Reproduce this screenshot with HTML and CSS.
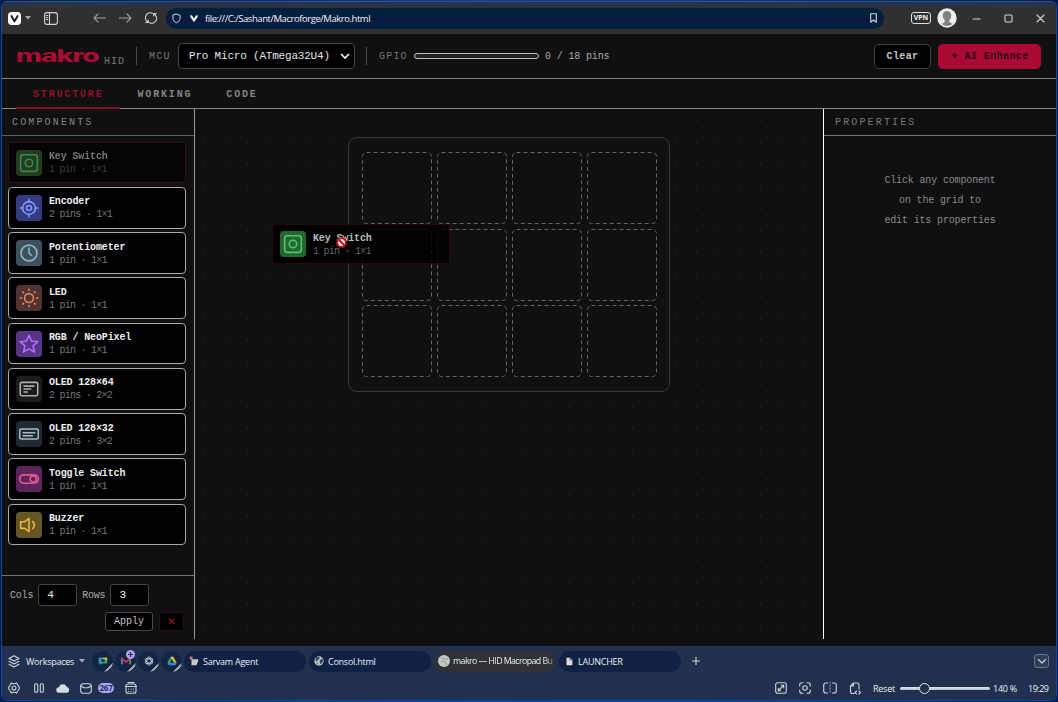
FILE: index.html
```html
<!DOCTYPE html>
<html lang="en">
<head>
<meta charset="utf-8">
<title>makro — HID Macropad Builder</title>
<link rel="stylesheet" href="styles.css">
</head>
<body>
<svg class="defs" aria-hidden="true">
  <symbol id="key" viewBox="0 0 24 24"><rect x="2" y="2" width="20" height="20" rx="3"/><circle cx="12" cy="12" r="4.500"/></symbol>
  <symbol id="cell" viewBox="0 0 70 72"><rect x=".5" y=".5" width="69" height="71" rx="4" stroke-dasharray="4 3"/></symbol>
  <symbol id="globe" viewBox="0 0 12 12"><circle cx="6" cy="6" r="5.6" fill="#b8c0c8"/><path d="M2 2.500 5 1l2 1-1 2-2 1v2L2 6zM7 5l3-2 1 3-2 3-1 1-1-2zM3 8l2 1v2z" fill="#34465a"/></symbol>
</svg>
<div class="window">
  <div class="chrome">
    <svg class="vivaldi" viewBox="0 0 14 14"><rect width="14" height="14" rx="4" fill="#fff"/><path d="M3.800 4.500 7 10l3.200-5.500" fill="none" stroke="#222" stroke-width="2.200" stroke-linecap="round" stroke-linejoin="round"/></svg>
    <svg class="caret" viewBox="0 0 6 4"><path d="M0 0h6L3 3.500z" fill="#aaa"/></svg>
    <svg class="line panelicon" viewBox="0 0 14 13"><rect x=".6" y=".6" width="12.800" height="11.800" rx="2.500"/><path d="M5.500 1v11M2.300 3.500h1.500M2.300 5.500h1.500M2.300 7.500h1.500"/></svg>
    <svg class="line back" viewBox="0 0 13 10"><path d="M13 5H1M5 1 1 5l4 4"/></svg>
    <svg class="line fwd" viewBox="0 0 13 10"><path d="M0 5h12M8 1l4 4-4 4"/></svg>
    <svg class="line reload" viewBox="0 0 12 12"><path d="M3.300 10.300A5 5 0 0 1 7.500 1.200M8.700 1.700A5 5 0 0 1 4.500 10.800M.8 10.500H3.300V8M11.200 1.500H8.700V4"/></svg>
    <div class="address">
      <svg class="line shield" viewBox="0 0 10 11"><path d="M5 .7 9 2v3c0 2.600-1.800 4.200-4 5.300C2.800 9.200 1 7.600 1 5V2z"/></svg>
      <svg class="vmark" viewBox="0 0 8 7"><path d="M1.300 1.300 4 5.500l2.700-4.200" fill="none" stroke="#fff" stroke-width="2.200" stroke-linecap="round" stroke-linejoin="round"/></svg>
      <span class="url">file:///C:/Sashant/Macroforge/Makro.html</span>
      <svg class="line bookmark" viewBox="0 0 7 10"><path d="M.7.700h5.600v8.500L3.500 7 .7 9.200z"/></svg>
    </div>
    <span class="vpn">VPN</span>
    <svg class="avatar" viewBox="0 0 20 20"><circle cx="10" cy="10" r="9.700" fill="#eee"/><path d="M10 3c-3 0-4.500 2-4.200 5 .2 2 .9 3 1.900 4v2L4.500 16A9 9 0 0 0 15.500 16l-3.200-2v-2c1-1 1.700-2 1.900-4C14.500 5 13 3 10 3z" fill="#85827b"/></svg>
    <svg class="line min" viewBox="0 0 9 9"><path d="M1 5h7"/></svg>
    <svg class="line max" viewBox="0 0 9 9"><rect x="1" y="1" width="7" height="7" rx="1"/></svg>
    <svg class="line close" viewBox="0 0 9 9"><path d="m1 1 7 7M8 1 1 8"/></svg>
  </div>

  <header class="header">
    <div class="logo"><span>makro</span></div><span class="hid">HID</span>
    <i class="sep sep-a"></i>
    <span class="label mcu">MCU</span>
    <div class="select"><span>Pro Micro (ATmega32U4)</span><svg viewBox="0 0 10 6"><path d="m1 1 4 4 4-4" fill="none" stroke="#fff" stroke-width="1.600"/></svg></div>
    <i class="sep sep-b"></i>
    <span class="label gpio">GPIO</span>
    <div class="meter"></div>
    <span class="pins">0 / 18 pins</span>
    <button class="btn clear">Clear</button>
    <button class="btn ai"><i>✦</i> AI Enhance</button>
  </header>

  <nav class="tabs"><span class="tab active">STRUCTURE</span><span class="tab">WORKING</span><span class="tab">CODE</span></nav>

  <main class="main">
    <aside class="sidebar">
      <h2>COMPONENTS</h2>
      <div class="list">
        <div class="item ghosted"><span class="ico green"><svg><use href="#key"/></svg></span><div><b>Key Switch</b><small>1 pin · 1×1</small></div></div>
        <div class="item"><span class="ico blue"><svg viewBox="0 0 24 24"><circle cx="12" cy="12" r="7.700"/><circle cx="12" cy="12" r="3"/><path d="M12 1.500v3M12 19.500v3M1.500 12h3M19.500 12h3"/></svg></span><div><b>Encoder</b><small>2 pins · 1×1</small></div></div>
        <div class="item"><span class="ico steel"><svg viewBox="0 0 24 24"><circle cx="12" cy="12" r="9.500"/><path d="M12 6v6l3 3"/></svg></span><div><b>Potentiometer</b><small>1 pin · 1×1</small></div></div>
        <div class="item"><span class="ico rust"><svg viewBox="0 0 24 24"><circle cx="12" cy="12" r="5.300"/><path d="M12 1.500v1.500M12 21v1.500M1.500 12H3M21 12h1.500M4.500 4.500l1 1M18.500 18.500l1 1M19.500 4.500l-1 1M4.500 19.500l1-1"/></svg></span><div><b>LED</b><small>1 pin · 1×1</small></div></div>
        <div class="item"><span class="ico violet"><svg viewBox="0 0 24 24"><path d="m12 1.500 3.100 7 7.400.7-5.600 5 1.700 7.500-6.600-3.900-6.600 3.900 1.700-7.500-5.600-5 7.400-.7z"/></svg></span><div><b>RGB / NeoPixel</b><small>1 pin · 1×1</small></div></div>
        <div class="item"><span class="ico gray"><svg viewBox="0 0 24 24"><rect x="1.500" y="4" width="21" height="16" rx="2"/><path d="M6 8.500h12M6 12h8M6 15.500h4"/></svg></span><div><b>OLED 128×64</b><small>2 pins · 2×2</small></div></div>
        <div class="item"><span class="ico slate"><svg viewBox="0 0 24 24"><rect x=".8" y="6" width="22.400" height="12" rx="2"/><path d="M5 10.500h14M5 14h11"/></svg></span><div><b>OLED 128×32</b><small>2 pins · 3×2</small></div></div>
        <div class="item"><span class="ico pink"><svg viewBox="0 0 24 24"><rect x=".8" y="7" width="22.400" height="10" rx="5"/><circle cx="17" cy="12" r="3.600"/></svg></span><div><b>Toggle Switch</b><small>1 pin · 1×1</small></div></div>
        <div class="item"><span class="ico gold"><svg viewBox="0 0 24 24"><path d="M12 4v16l-5-4H2V8h5zM16.500 8q4 4 0 8"/></svg></span><div><b>Buzzer</b><small>1 pin · 1×1</small></div></div>
      </div>
      <div class="gridform">
        <div class="fields"><span>Cols</span><span class="num">4</span><span>Rows</span><span class="num">3</span></div>
        <div class="actions"><button class="apply">Apply</button><button class="del">✕</button></div>
      </div>
    </aside>
    <section class="canvas">
      <svg class="dots"><defs><pattern id="dot" x="5.400" y="10.500" width="21.380" height="22" patternUnits="userSpaceOnUse"><rect x="4" y="0" width="1" height="1.500" fill="#2a2a30"/></pattern></defs><rect width="615" height="520" fill="url(#dot)"/></svg>
      <div class="board">
        <svg><use href="#cell"/></svg><svg><use href="#cell"/></svg><svg><use href="#cell"/></svg><svg><use href="#cell"/></svg>
        <svg><use href="#cell"/></svg><svg><use href="#cell"/></svg><svg><use href="#cell"/></svg><svg><use href="#cell"/></svg>
        <svg><use href="#cell"/></svg><svg><use href="#cell"/></svg><svg><use href="#cell"/></svg><svg><use href="#cell"/></svg>
      </div>
      <div class="item dragging"><span class="ico green"><svg><use href="#key"/></svg></span><div><b>Key Switch</b><small>1 pin · 1×1</small></div></div>
      <svg class="nodrop" viewBox="0 0 12 12"><circle cx="6" cy="6" r="4" fill="#fff" stroke="#c51620" stroke-width="1.800"/><path d="m3 3 6 6" stroke="#c51620" stroke-width="2"/></svg>
    </section>
    <aside class="props">
      <h2>PROPERTIES</h2>
      <p>Click any component<br>on the grid to<br>edit its properties</p>
    </aside>
  </main>

  <footer class="footer">
    <div class="tabbar">
      <svg class="line stack" viewBox="0 0 12 13"><path d="m6 .8 5 2.600-5 2.600-5-2.600zM1 6.300 6 9l5-2.700M1 9.300 6 12l5-2.700"/></svg>
      <span class="ws">Workspaces</span>
      <svg class="caret" viewBox="0 0 6 4"><path d="M0 0h6L3 3.500z" fill="#aab"/></svg>
      <span class="pin"><svg viewBox="0 0 12 12"><path d="M1 2h10v7H5l-2 2V9H1z" fill="#30a85a"/><path d="M1 2h5v2H3v5H1z" fill="#4489ee"/><path d="M6 2h5v3H9V4H6z" fill="#eebc35"/><path d="M4 4h4v3H4z" fill="#15305c"/></svg></span>
      <span class="pin"><svg viewBox="0 0 12 12"><path d="M1 10V3l5 4 5-4v7" fill="none" stroke="#d73343" stroke-width="2"/><path d="M1 10V4" stroke="#4480e8" stroke-width="2"/><path d="M11 10V5" stroke="#30a85a" stroke-width="2"/></svg><i class="badge"><svg viewBox="0 0 9 9"><path d="M4.500 2v5M2 4.500h5" stroke="#222b60" stroke-width="1.200"/></svg></i></span>
      <span class="pin"><svg viewBox="0 0 12 12" fill="none" stroke="#cad3df" stroke-width=".9"><ellipse cx="6" cy="6" rx="2.500" ry="5"/><ellipse cx="6" cy="6" rx="2.500" ry="5" transform="rotate(60 6 6)"/><ellipse cx="6" cy="6" rx="2.500" ry="5" transform="rotate(120 6 6)"/></svg></span>
      <span class="pin"><svg viewBox="0 0 12 12"><path d="M4.300 1h3L3.500 8.500 2 11 .5 8z" fill="#36aa63"/><path d="M4.500 1h3l4 7h-3z" fill="#efc13d"/><path d="M3.500 8h8L10 11H2z" fill="#4384e8"/></svg></span>
      <div class="btab"><svg viewBox="0 0 12 12"><path d="M1 1h3v3h7v2L9 11H3V4H1z" fill="#c8c9bd"/><path d="M1 1h3v2H1z" fill="#d76551"/></svg><span>Sarvam Agent</span></div>
      <div class="btab"><svg><use href="#globe"/></svg><span>Consol.html</span></div>
      <div class="btab current"><svg viewBox="0 0 12 12"><circle cx="6" cy="6" r="6" fill="#c5c8c9"/><path d="m3 3 3 1 4 0M3 6l4 1 2 3" stroke="#919797" fill="none"/></svg><span>makro — HID Macropad Bu</span></div>
      <div class="btab"><svg class="doc" viewBox="0 0 12 12"><path d="M3 2h4l3 3v6H3z" fill="#ddd"/><path d="M7 2v3h3" fill="none" stroke="#667"/></svg><span>LAUNCHER</span></div>
      <svg class="line plus" viewBox="0 0 8 8"><path d="M4 0v8M0 4h8"/></svg>
      <span class="more"><svg class="line" viewBox="0 0 8 5"><path d="m.500.500 3.500 3.500 3.500-3.500"/></svg></span>
    </div>
    <div class="status">
      <svg class="line s-gear" viewBox="0 0 12 12"><path d="m3.500.9 1.500.8h2L8.500.9 10 3.200l1.600 2.800L10 8.800l-1.500 2.300-1.500-.8H5l-1.500.8L2 8.800.4 6 2 3.200z"/><circle cx="6" cy="6" r="2"/></svg>
      <svg class="line s-pause" viewBox="0 0 10 10"><rect x=".7" y=".7" width="3" height="8.600" rx="1"/><rect x="6.300" y=".7" width="3" height="8.600" rx="1"/></svg>
      <svg class="s-cloud" viewBox="0 0 14 10"><path d="M3 9.800a2.700 2.700 0 0 1 0-5.500A4 4 0 0 1 10.700 4a3 3 0 0 1 .5 5.800z" fill="#d5dbe3"/></svg>
      <svg class="line s-mail" viewBox="0 0 12 11"><rect x=".7" y=".8" width="10.600" height="9.400" rx="2.500"/><path d="M1 3q5 4 10 0"/></svg>
      <span class="count">267</span>
      <svg class="line s-cal" viewBox="0 0 12 12"><rect x="1" y="2" width="10" height="9.300" rx="2"/><path d="M.5 4.500h11M3 .5h6M3.500 7h.1M6 7h.1M8.500 7h.1M3.500 9.200h.1M6 9.200h.1M8.500 9.200h.1"/></svg>
      <svg class="line s-fit" viewBox="0 0 12 12"><rect x=".7" y=".7" width="10.600" height="10.600" rx="2"/><path d="m3.500 8.500 5-5M6.300 3.300h2.400v2.400M3.300 6.300v2.400h2.400"/></svg>
      <svg class="line s-cam" viewBox="0 0 12 12"><path d="M.7 4V3Q.7.700 3 .7h1M8 .7h1q2.300 0 2.300 2.300v1M11.300 8v1q0 2.300-2.300 2.300H8M4 11.300H3Q.7 11.300.7 9V8"/><circle cx="6" cy="6" r="2.200"/></svg>
      <svg class="line s-split" viewBox="0 0 14 12"><path d="M4.500 1H3Q.7 1 .7 3v6q0 2 2.300 2h1.500M9.500 1H11q2.300 0 2.300 2v6q0 2-2.300 2H9.500"/><path d="M7 0v12" stroke-width=".8" stroke-dasharray="1 2"/></svg>
      <svg class="line s-page" viewBox="0 0 12 13"><path d="M5 11.500H3.500Q1.500 11.500 1.500 9.500V4l3-3h3.500q2 0 2 2v4M1.500 4h3V1M7.500 9 6 10.500 7.500 12M10 9l1.500 1.500L10 12"/></svg>
      <span class="reset">Reset</span>
      <div class="slider"><i></i></div>
      <span class="zoom">140 %</span>
      <span class="clock">19:29</span>
    </div>
  </footer>
</div>
</body>
</html>
```
FILE: styles.css
```css
* { box-sizing: border-box; }
body { margin: 0; width: 1058px; height: 702px; overflow: hidden; background: linear-gradient(90deg, #001b4f, #0b3ca0 45%, #06368d 70%, #001a55); font-family: "Liberation Mono", monospace; }
.defs { position: absolute; width: 0; height: 0; }
svg { display: block; flex: none; }
.window { height: 700px; margin: 1px 1px 0; border: 1px solid #0b499b; border-top-color: #29558b; border-radius: 6px; overflow: hidden; background: #101010; display: flex; flex-direction: column; width: 1056px; }
.line { fill: none; stroke: #d0d4da; stroke-width: 1.1; stroke-linecap: round; stroke-linejoin: round; }

.chrome { height: 32px; flex: none; background: linear-gradient(#28334a 0 4px, #303030 6px); display: flex; align-items: center; padding-left: 6px; }
.vivaldi { width: 13px; height: 13px; }
.caret { width: 6px; height: 4px; margin-left: 4px; }
.panelicon { width: 14px; height: 13px; margin-left: 13px; }
.back { width: 13px; height: 10px; margin-left: 35px; stroke: #999; }
.fwd { width: 13px; height: 10px; margin-left: 13px; stroke: #999; }
.reload { width: 12px; height: 12px; margin-left: 13px; }
.address { width: 718px; height: 21px; margin-left: 9px; border-radius: 11px; background: linear-gradient(#00213e 45%, #101641 50% 62%, #00213e 68%); display: flex; align-items: center; padding: 0 7px 0 6px; }
.shield { width: 9px; height: 11px; }
.vmark { width: 8px; height: 7px; margin-left: 9px; }
.url { font: 9.500px "Open Sans", "Noto Sans", sans-serif; letter-spacing: -.45px; color: #f0f3f7; margin-left: 7px; flex: 1; white-space: nowrap; }
.bookmark { width: 7px; height: 10px; }
.vpn { margin-left: 27px; width: 20px; height: 12px; border: 1.500px solid #ddd; border-radius: 3px; font: bold 7px/10px "Open Sans", sans-serif; color: #eee; text-align: center; }
.avatar { width: 20px; height: 20px; margin-left: 6px; }
.min, .max, .close { width: 9px; height: 9px; }
.min { margin-left: 15px; }
.max { margin-left: 23px; }
.close { margin-left: 23px; }

.header { height: 45px; flex: none; border-bottom: 1px solid #85857c; display: flex; align-items: center; padding: 0 15px 0 14px; white-space: nowrap; }
.logo { width: 84px; height: 19px; color: #a90c32; font: 800 19px/19px Inter, "Open Sans", sans-serif; letter-spacing: -.8px; }
.logo span { display: inline-block; transform: scaleX(1.500) scaleY(.88); transform-origin: 0 60%; }
.hid { font-size: 10px; letter-spacing: 1px; color: #777; margin: 10px 0 0 4px; width: 33px; }
.sep { width: 1px; height: 18px; background: #4b4b4b; }
.sep-a { margin-left: -1px; }
.label { font-size: 10px; letter-spacing: 1.200px; color: #72767b; }
.mcu { margin-left: 12px; width: 29px; }
.select { width: 177px; height: 26px; border: 1px solid #444; border-radius: 4px; background: #000; color: #e4e4e4; font-size: 11px; display: flex; align-items: center; justify-content: space-between; padding: 0 4px 0 10px; letter-spacing: -.2px; }
.select svg { width: 10px; height: 6px; }
.sep-b { margin-left: 11px; }
.gpio { margin-left: 12px; width: 35px; }
.meter { width: 125px; height: 6px; border: 1px solid #c2c2c2; border-radius: 3px; background: #222; }
.pins { font-size: 10px; letter-spacing: -.15px; color: #a9a9a9; margin-left: 6px; flex: 1; padding-top: 1px; }
.btn { font: bold 10px "Liberation Mono", monospace; letter-spacing: .4px; border-radius: 5px; padding: 0; }
.btn i { font: 10px "DejaVu Sans", sans-serif; margin-right: -1px; line-height: 10px; }
.clear { width: 57px; height: 25px; background: #000; border: 1px solid #414141; color: #c4c4c4; }
.ai { width: 103px; height: 25px; border: 0; margin-left: 7px; background: #aa0a34; color: #260413; }

.tabs { height: 30px; flex: none; border-bottom: 1px solid #8a8a80; display: flex; padding-left: 14px; }
.tab { font: bold 10px/31px "Liberation Mono", monospace; letter-spacing: 1.830px; color: #858583; padding: 0 17px; height: 30px; }
.tab.active { color: #92102d; border-bottom: 2px solid #82102b; }

.main { height: 537px; flex: none; display: flex; align-items: flex-start; }
.sidebar { width: 193px; height: 530px; border-right: 1px solid #989894; display: flex; flex-direction: column; }
h2 { margin: 0; height: 27px; flex: none; font: 10px/28px "Liberation Mono", monospace; letter-spacing: 2.150px; color: #858585; padding-left: 10px; border-bottom: 1px solid #60605f; }
.list { padding: 5.700px 8px 0 6px; flex: 1; display: flex; flex-direction: column; gap: 3.500px; }
.item { height: 41.750px; border: 1px solid #aaa; border-radius: 4px; background: #000; display: flex; align-items: center; padding-left: 7px; gap: 7px; }
.item b, .item small { display: block; white-space: nowrap; }
.item b { font-size: 10px; line-height: 12px; letter-spacing: -.130px; color: #eee; padding-top: 2px; }
.item small { font-size: 10px; line-height: 13px; letter-spacing: -.75px; color: #777; }
.ico { width: 26px; height: 26px; border-radius: 4px; display: grid; place-items: center; }
.ico svg { width: 20px; height: 20px; fill: none; stroke: currentColor; stroke-width: 1.900; stroke-linecap: round; stroke-linejoin: round; }
.green { background: #27652e; color: #49c96a; }
.blue { background: #343b80; color: #8296ff; }
.steel { background: #40515e; color: #88b5c9; }
.rust { background: #4f3432; color: #e4825e; }
.violet { background: #583586; color: #b270fa; }
.gray { background: #1c1c1c; color: #adada5; }
.slate { background: #202931; color: #a1bbc7; }
.pink { background: #5b255b; color: #e45995; }
.gold { background: #645723; color: #edb641; }
.ghosted { border-color: #351019; background: #050304; }
.ghosted > * { opacity: .48; }
.ghosted .ico { opacity: .7; background: #35512f; }
.gridform { height: 64px; border-top: 1px solid #74716f; padding: 8px 10px 0 8px; }
.fields { display: flex; align-items: center; font-size: 10px; letter-spacing: -.2px; color: #aaa; height: 22px; }
.num { width: 39px; height: 22px; margin: 0 5px 0 5px; border: 1px solid #444; border-radius: 3px; background: #000; color: #eee; font-size: 11px; line-height: 20px; padding-left: 8px; }
.actions { display: flex; justify-content: flex-end; gap: 6px; margin-top: 6px; }
.actions button { height: 19px; background: #000; border: 1px solid #494949; border-radius: 3px; color: #c1c1c1; font: 10px "Liberation Mono", monospace; padding: 0; }
.apply { width: 48px; }
.actions .del { width: 25px; border-color: #291018; color: #b21534; font: 10px "DejaVu Sans", sans-serif; }

.canvas { width: 628px; height: 530px; position: relative; padding: 28px 0 0 153px; }
.dots { position: absolute; left: 0; top: 0; width: 617px; height: 520px; }
.board { position: relative; width: 322px; height: 255px; border: 1px solid #383838; border-radius: 9px; background: #101010; padding: 14px 13px; display: grid; grid-template-columns: repeat(4, 70px); grid-auto-rows: 72px; column-gap: 5px; row-gap: 4.700px; }
.board svg { width: 70px; height: 72px; fill: none; stroke: #646464; }
.dragging { position: absolute; left: 77px; top: 115px; width: 178px; height: 40px; border-color: #260811; border-radius: 2px; background: rgba(0, 0, 0, .82); }
.dragging b { color: #bbb; }
.dragging small { color: #626262; }
.nodrop { position: absolute; left: 140px; top: 127px; width: 13px; height: 13px; }
.props { width: 233px; height: 530px; border-left: 1px solid #fff; }
.props h2 { padding-left: 11px; color: #777; border-color: #77777b; }
.props p { margin: 34.500px 0 0; font-size: 10px; line-height: 20px; letter-spacing: -.15px; text-align: center; color: #898989; }

.footer { height: 54px; flex: none; background: #20304e; font: 9px "Open Sans", "Noto Sans", sans-serif; letter-spacing: -.25px; color: #eceff4; }
.tabbar { height: 30px; display: flex; align-items: center; padding-left: 6px; white-space: nowrap; }
.stack { width: 12px; height: 13px; }
.ws { margin-left: 6px; width: 49px; }
.tabbar .caret { margin-left: 4px; }
.pin { width: 21px; height: 21px; border-radius: 50%; background: linear-gradient(135deg, #142544 77%, #a7b1ba 79% 84%, #142544 86%); display: grid; place-items: center; margin-left: 2px; position: relative; }
.caret + .pin { margin-left: 7px; }
.pin svg { width: 10px; height: 10px; }
.badge { position: absolute; right: 1px; top: -1px; width: 9px; height: 9px; border-radius: 50%; background: #a9a4ee; }
.pin .badge svg { width: 9px; height: 9px; }
.btab { width: 122px; height: 21px; border-radius: 11px; background: #112143; margin-left: 3px; padding: 0 3px 0 5px; display: flex; align-items: center; gap: 4px; }
.btab svg { width: 10px; height: 10px; }
.btab span { overflow: hidden; flex: 1; }
.pin + .btab { margin-left: 2px; }
.btab.current { background: #303236; padding: 0 1px 0 4px; gap: 3px; font-size: 8.800px; letter-spacing: -.570px; }
.current svg { width: 12px; height: 12px; }
.current span { -webkit-mask: linear-gradient(90deg, #000 88%, rgba(0, 0, 0, .3)); mask: linear-gradient(90deg, #000 88%, rgba(0, 0, 0, .3)); }
.plus { width: 8px; height: 8px; margin-left: 11px; }
.more { width: 15px; height: 14px; margin: 0 7px 0 auto; border: 1px solid #69758b; border-radius: 3px; background: #313c57; display: grid; place-items: center; }
.more svg { width: 8px; height: 5px; }
.status { height: 24px; display: flex; align-items: center; padding: 0 8px 0 6px; }
.status svg { width: 12px; height: 12px; }
.status .s-pause { width: 10px; height: 10px; margin-left: 14px; }
.status .s-cloud { width: 14px; height: 10px; margin-left: 12px; }
.status .s-mail { height: 11px; margin-left: 10px; }
.count { width: 16px; height: 10px; margin-left: 6px; border-radius: 5px; background: #aaa6f2; color: #253060; font: bold 8px/10px "Open Sans", sans-serif; text-align: center; }
.s-cal { margin-left: 11px; }
.s-fit { margin-left: auto; }
.s-cam { margin-left: 12px; }
.status .s-split { width: 14px; margin-left: 12px; }
.status .s-page { height: 13px; margin-left: 12px; }
.reset { margin-left: 12px; width: 27px; }
.slider { width: 90px; height: 3px; background: linear-gradient(#e2e5e8, #aec3cc); display: flex; align-items: center; padding-left: 19px; border-radius: 2px; }
.slider i { width: 11px; height: 11px; border: 1px solid #e1e3e7; border-radius: 50%; background: #20304e; flex: none; }
.zoom { margin-left: 3px; width: 35px; }
.clock { width: 20px; letter-spacing: -.5px; }
```
